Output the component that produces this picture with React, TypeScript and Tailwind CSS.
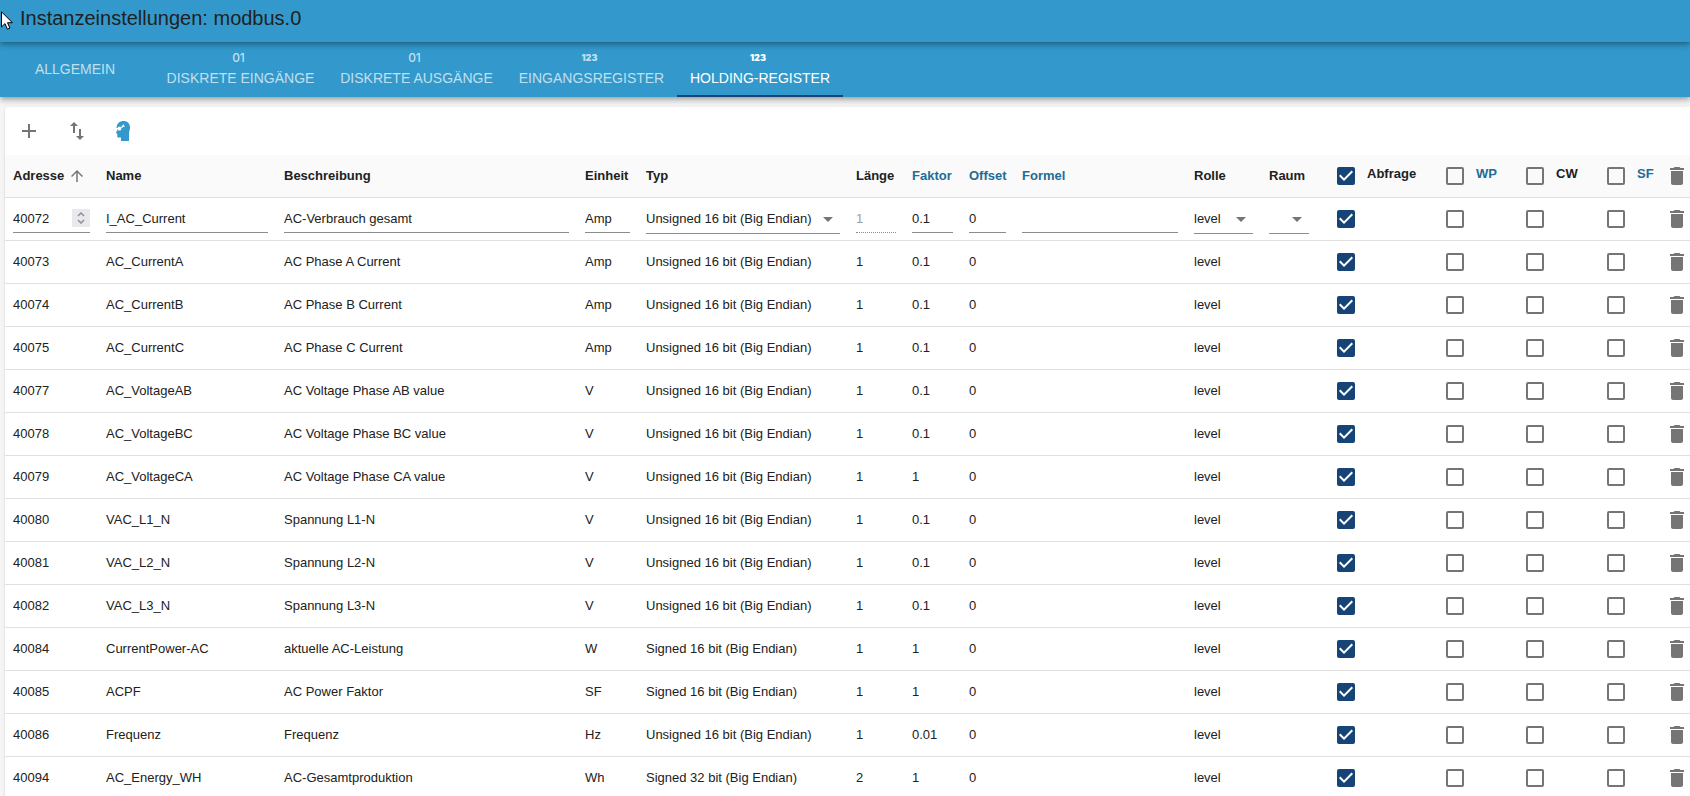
import React, { useState } from 'react';
import clsx from 'clsx';
import { MdAdd, MdArrowDropDown, MdArrowUpward, MdDelete, MdImportExport } from 'react-icons/md';

interface Register {
  address: number;
  name: string;
  description: string;
  unit: string;
  type: string;
  len: number;
  factor: string;
}

const U16 = 'Unsigned 16 bit (Big Endian)';
const S16 = 'Signed 16 bit (Big Endian)';
const S32 = 'Signed 32 bit (Big Endian)';

const registers: Register[] = [
  { address: 40072, name: 'I_AC_Current', description: 'AC-Verbrauch gesamt', unit: 'Amp', type: U16, len: 1, factor: '0.1' },
  { address: 40073, name: 'AC_CurrentA', description: 'AC Phase A Current', unit: 'Amp', type: U16, len: 1, factor: '0.1' },
  { address: 40074, name: 'AC_CurrentB', description: 'AC Phase B Current', unit: 'Amp', type: U16, len: 1, factor: '0.1' },
  { address: 40075, name: 'AC_CurrentC', description: 'AC Phase C Current', unit: 'Amp', type: U16, len: 1, factor: '0.1' },
  { address: 40077, name: 'AC_VoltageAB', description: 'AC Voltage Phase AB value', unit: 'V', type: U16, len: 1, factor: '0.1' },
  { address: 40078, name: 'AC_VoltageBC', description: 'AC Voltage Phase BC value', unit: 'V', type: U16, len: 1, factor: '0.1' },
  { address: 40079, name: 'AC_VoltageCA', description: 'AC Voltage Phase CA value', unit: 'V', type: U16, len: 1, factor: '1' },
  { address: 40080, name: 'VAC_L1_N', description: 'Spannung L1-N', unit: 'V', type: U16, len: 1, factor: '0.1' },
  { address: 40081, name: 'VAC_L2_N', description: 'Spannung L2-N', unit: 'V', type: U16, len: 1, factor: '0.1' },
  { address: 40082, name: 'VAC_L3_N', description: 'Spannung L3-N', unit: 'V', type: U16, len: 1, factor: '0.1' },
  { address: 40084, name: 'CurrentPower-AC', description: 'aktuelle AC-Leistung', unit: 'W', type: S16, len: 1, factor: '1' },
  { address: 40085, name: 'ACPF', description: 'AC Power Faktor', unit: 'SF', type: S16, len: 1, factor: '1' },
  { address: 40086, name: 'Frequenz', description: 'Frequenz', unit: 'Hz', type: U16, len: 1, factor: '0.01' },
  { address: 40094, name: 'AC_Energy_WH', description: 'AC-Gesamtproduktion', unit: 'Wh', type: S32, len: 2, factor: '1' },
];

const tabs = [
  { label: 'ALLGEMEIN', icon: '', width: 'w-[150px] mr-1' },
  { label: 'DISKRETE EINGÄNGE', icon: '01', width: 'w-[173px]' },
  { label: 'DISKRETE AUSGÄNGE', icon: '01', width: 'w-[179px]' },
  { label: 'EINGANGSREGISTER', icon: '123', width: 'w-[171px]' },
  { label: 'HOLDING-REGISTER', icon: '123', width: 'w-[166px]' },
];

const flags = [
  { id: 'poll', label: 'Abfrage', link: false, on: true },
  { id: 'wp', label: 'WP', link: true, on: false },
  { id: 'cw', label: 'CW', link: false, on: false },
  { id: 'sf', label: 'SF', link: true, on: false },
];

const lineInput = 'block h-7 w-full min-w-0 border-b border-[#8c8c8c] bg-transparent outline-none';
const lineSelect = 'block h-[30px] w-full appearance-none border-b border-[#8c8c8c] bg-transparent outline-none';

function Checkbox({ id, label, on }: { id: string; label: string; on: boolean }) {
  return (
    <span className="relative ml-3 block size-[18px] shrink-0">
      <input
        id={id}
        type="checkbox"
        aria-label={label}
        defaultChecked={on}
        className="peer block size-[18px] appearance-none rounded-[2px] border-2 border-[#757575] checked:border-[#164477] checked:bg-[#164477]"
      />
      <svg
        viewBox="3 3 18 18"
        className="pointer-events-none absolute inset-0 hidden size-[18px] text-white peer-checked:block"
        aria-hidden="true"
      >
        <path fill="currentColor" d="M10 17l-5-5 1.410-1.410L10 14.170l7.590-7.590L19 8l-9 9z" />
      </svg>
    </span>
  );
}

function DropDown({ label, value, options }: { label: string; value: string; options: string[] }) {
  return (
    <div className="relative">
      <select aria-label={label} defaultValue={value} className={lineSelect}>
        {options.map((o) => (
          <option key={o}>{o}</option>
        ))}
      </select>
      <MdArrowDropDown className="pointer-events-none absolute top-[3px] right-0 size-6 text-[#757575]" />
    </div>
  );
}

function HeadIcon() {
  return (
    <svg viewBox="0 0 14 20" className="h-5 w-3.5" aria-hidden="true">
      <path
        fill="#3399cc"
        d="M7.5 0C11.400 0 14 2.600 14 6.200c0 2-.4 3.600-1 5.300V20H5v-3.500H2.300c-.7 0-1-.4-1-1.100v-2.600l-1-.6c-.4-.3-.3-.7 0-1.200l1-1.700C.5 8.300.3 7 .7 5.500 1.300 2.200 4 0 7.500 0z"
      />
      <path fill="#fff" d="M0 7h1.500l.7-1.200h2.200l.9.900L5.200 8.600 4.300 9.500H2.300L1.500 8.400H0z" />
      <path fill="#fff" d="M4.700 6.600l1-.7V4.500h1.200V3.600h1v1.200h.9v.9H7.200l-1 1.200z" />
    </svg>
  );
}

function EditRow({ r }: { r: Register }) {
  return (
    <>
      <td className="px-2">
        <div className="relative">
          <input type="text" inputMode="numeric" aria-label="Adresse" defaultValue={r.address} className={lineInput} />
          <span className="pointer-events-none absolute top-1 right-0 flex h-[18px] w-[18px] items-center justify-center bg-[#e9e9ed]">
            <svg viewBox="0 0 8 12" className="h-3 w-2" fill="none" stroke="#8f8f9d" strokeWidth="1.500">
              <path d="M1 4l3-3 3 3M1 8l3 3 3-3" />
            </svg>
          </span>
        </div>
      </td>
      <td className="px-2"><input type="text" aria-label="Name" defaultValue={r.name} className={lineInput} /></td>
      <td className="px-2"><input type="text" aria-label="Beschreibung" defaultValue={r.description} className={lineInput} /></td>
      <td className="px-2"><input type="text" aria-label="Einheit" defaultValue={r.unit} className={lineInput} /></td>
      <td className="px-2"><DropDown label="Typ" value={r.type} options={[U16, S16, S32]} /></td>
      <td className="px-2">
        <input type="text" aria-label="Länge" disabled defaultValue={r.len} className={clsx(lineInput, 'border-dotted text-[#9e9e9e]')} />
      </td>
      <td className="px-2"><input type="text" aria-label="Faktor" defaultValue={r.factor} className={lineInput} /></td>
      <td className="px-2"><input type="text" aria-label="Offset" defaultValue="0" className={lineInput} /></td>
      <td className="px-2"><input type="text" aria-label="Formel" className={lineInput} /></td>
      <td className="px-2"><DropDown label="Rolle" value="level" options={['level', 'value', 'state']} /></td>
      <td className="px-2"><DropDown label="Raum" value="" options={['']} /></td>
    </>
  );
}

function TextRow({ r }: { r: Register }) {
  return (
    <>
      <td className="px-2">{r.address}</td>
      <td className="px-2">{r.name}</td>
      <td className="px-2">{r.description}</td>
      <td className="px-2">{r.unit}</td>
      <td className="px-2">{r.type}</td>
      <td className="px-2">{r.len}</td>
      <td className="px-2">{r.factor}</td>
      <td className="px-2">0</td>
      <td className="px-2" />
      <td className="px-2">level</td>
      <td className="px-2" />
    </>
  );
}

export default function App() {
  const [activeTab, setActiveTab] = useState('HOLDING-REGISTER');

  return (
    <div className="relative flex h-screen flex-col overflow-hidden bg-[#f5f5f5] font-['Liberation_Sans',Arial,sans-serif] text-[13px] text-[#212121]">
      <header className="relative z-20 flex h-[42px] shrink-0 items-center bg-[#3399cc] px-5 pb-[6px] shadow-[0_2px_4px_-1px_rgba(0,0,0,0.2),0_4px_5px_rgba(0,0,0,0.14),0_1px_10px_rgba(0,0,0,0.12)]">
        <h1 className="text-xl leading-6">Instanzeinstellungen: modbus.0</h1>
      </header>

      <nav
        role="tablist"
        className="relative z-10 flex h-[55px] shrink-0 bg-[#3399cc] text-sm shadow-[0_2px_4px_-1px_rgba(0,0,0,0.2),0_4px_5px_rgba(0,0,0,0.14),0_1px_10px_rgba(0,0,0,0.12)]"
      >
        {tabs.map((tab) => (
          <button
            key={tab.label}
            role="tab"
            aria-selected={activeTab === tab.label}
            onClick={() => setActiveTab(tab.label)}
            className={clsx(
              'flex flex-col items-center justify-center border-b-2 whitespace-nowrap',
              tab.width,
              tab.icon && 'pb-[2px]',
              activeTab === tab.label ? 'border-[#164477] text-white' : 'border-transparent text-white/70',
            )}
          >
            {tab.icon && (
              <span
                className={clsx(
                  'flex h-5 items-center pr-1 font-["Inter",sans-serif]',
                  tab.icon === '01' ? 'text-xs font-medium' : 'pt-px text-[9px] font-black',
                )}
              >
                {tab.icon}
              </span>
            )}
            <span className="leading-5">{tab.label}</span>
          </button>
        ))}
      </nav>

      <main className="mt-[10px] ml-[5px] grow rounded-tl bg-white shadow-[0_2px_1px_-1px_rgba(0,0,0,0.2),0_1px_1px_rgba(0,0,0,0.14),0_1px_3px_rgba(0,0,0,0.12)]">
        <div className="flex h-12 items-center text-[#757575]">
          <button aria-label="Hinzufügen" className="flex w-12 justify-center">
            <MdAdd className="size-6" />
          </button>
          <button aria-label="Import / Export" className="flex w-12 justify-center">
            <MdImportExport className="size-6" />
          </button>
          <button aria-label="Expertenmodus" className="flex w-11 justify-center">
            <HeadIcon />
          </button>
        </div>

        <table className="w-full table-fixed border-separate border-spacing-0 text-left whitespace-nowrap [&_td]:border-b [&_td]:border-[#e0e0e0] [&_th]:border-b [&_th]:border-[#e0e0e0]">
          <colgroup>
            <col className="w-[93px]" />
            <col className="w-[178px]" />
            <col />
            <col className="w-[61px]" />
            <col className="w-[210px]" />
            <col className="w-14" />
            <col className="w-[57px]" />
            <col className="w-[53px]" />
            <col className="w-[172px]" />
            <col className="w-[75px]" />
            <col className="w-14" />
            <col className="w-[109px]" />
            <col className="w-20" />
            <col className="w-[81px]" />
            <col className="w-[75px]" />
            <col className="w-7" />
          </colgroup>
          <thead>
            <tr className="h-[43px] bg-[#fafafa]">
              <th className="px-2">
                <button className="flex items-center gap-1 font-bold">
                  Adresse <MdArrowUpward className="size-[18px] text-[#757575]" />
                </button>
              </th>
              <th className="px-2">Name</th>
              <th className="px-2">Beschreibung</th>
              <th className="px-2">Einheit</th>
              <th className="px-2">Typ</th>
              <th className="px-2">Länge</th>
              <th className="px-2 text-[#226c96]">Faktor</th>
              <th className="px-2 text-[#226c96]">Offset</th>
              <th className="px-2 text-[#226c96]">Formel</th>
              <th className="px-2">Rolle</th>
              <th className="px-2">Raum</th>
              {flags.map((f) => (
                <th key={f.id} className="pl-2">
                  <div className="flex items-center gap-3">
                    <Checkbox id={`all-${f.id}`} label={`${f.label} alle`} on={f.on} />
                    <label htmlFor={`all-${f.id}`} className={clsx('-mt-1', f.link && 'text-[#226c96]')}>
                      {f.label}
                    </label>
                  </div>
                </th>
              ))}
              <th>
                <button aria-label="Alle löschen" className="ml-[3px] block text-[#757575]">
                  <MdDelete className="size-6" />
                </button>
              </th>
            </tr>
          </thead>
          <tbody>
            {registers.map((r, i) => (
              <tr key={r.address} className="h-[43px]">
                {i === 0 ? <EditRow r={r} /> : <TextRow r={r} />}
                {flags.map((f) => (
                  <td key={f.id} className="pl-2">
                    <Checkbox id={`${f.id}-${r.address}`} label={`${f.label} ${r.address}`} on={f.on} />
                  </td>
                ))}
                <td>
                  <button aria-label={`${r.address} löschen`} className="ml-[3px] block text-[#757575]">
                    <MdDelete className="size-6" />
                  </button>
                </td>
              </tr>
            ))}
          </tbody>
        </table>
      </main>

      {/* Mouse pointer */}
      <svg viewBox="0 0 12 19" className="pointer-events-none absolute top-[11px] left-px z-30 h-[19px] w-3" aria-hidden="true">
        <path d="M.5.800v15.200l3.500-3.400 2.400 5.600 2.500-1.100-2.400-5.400h4.900z" fill="#fff" stroke="#000" strokeWidth="1" />
      </svg>
    </div>
  );
}
